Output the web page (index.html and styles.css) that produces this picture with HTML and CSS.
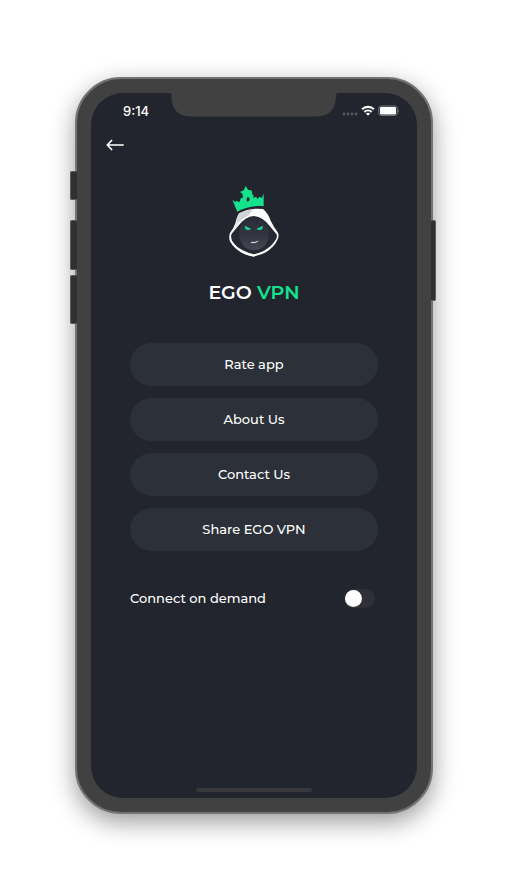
FILE: index.html
```html
<!DOCTYPE html>
<html lang="en">
<head>
<meta charset="utf-8">
<meta name="viewport" content="width=device-width, initial-scale=1">
<title>EGO VPN</title>
<link rel="stylesheet" href="styles.css">
</head>
<body>
<div class="phone">
  <span class="key key-mute"></span>
  <span class="key key-up"></span>
  <span class="key key-down"></span>
  <span class="key key-power"></span>
  <div class="screen">
    <header class="status">
      <time class="clock">9:14</time>
      <svg class="notch" viewBox="0 0 168 24" aria-hidden="true"><path d="M0 0H168Q166 0 166 4C166 16 159 23.500 146 23.500H21C8 23.500 1.500 16 1.500 4Q1.500 0 0 0Z" fill="#414141"/></svg>
      <div class="signals">
        <svg width="16" height="12" viewBox="0 0 16 12" aria-hidden="true"><g fill="#58595e"><circle cx="2" cy="9" r="1.400"/><circle cx="6" cy="9" r="1.400"/><circle cx="10" cy="9" r="1.400"/><circle cx="14" cy="9" r="1.400"/></g></svg>
        <svg width="14" height="12" viewBox="0 0 14 12" aria-hidden="true"><g fill="none" stroke="#fff" stroke-width="2.100"><path d="M1 4.300C4.300 1.100 9.700 1.100 13 4.300"/><path d="M3.300 7C5.400 5 8.600 5 10.700 7"/></g><path d="M4.900 8.600Q7 7 9.100 8.600L7 10.800Z" fill="#fff"/></svg>
        <svg width="22" height="12" viewBox="0 0 22 12" aria-hidden="true"><rect x=".7" y="1" width="18.600" height="9.400" rx="2.400" fill="none" stroke="#77787d"/><rect x="2" y="2" width="16" height="7.500" rx="1.200" fill="#fff"/><path d="M20.200 4.300Q22 6 20.200 7.700Z" fill="#85868a"/></svg>
      </div>
    </header>
    <button class="back" type="button" aria-label="Back">
      <svg width="18" height="12" viewBox="0 0 18 12" aria-hidden="true"><path d="M17.200 6H1.500M5.600 1.500L1.300 6L5.600 10.500" fill="none" stroke="#fff" stroke-width="1.700" stroke-linecap="round" stroke-linejoin="round"/></svg>
    </button>
    <main class="content">
      <svg class="logo" viewBox="0 0 240 270" role="img" aria-label="Hooded figure wearing a crown">
        <defs>
          <linearGradient id="face" x1="0" y1="0" x2="0" y2="1"><stop offset="0" stop-color="#292b36"/><stop offset=".6" stop-color="#343742"/><stop offset="1" stop-color="#464955"/></linearGradient>
        </defs>
        <path d="M70 107L55 72L64 78L68 74L76 79L81 65L87 66L85 53L78 48L89 43L95 30L102 41L114 44L114 55L119 58L118 66L126 62L131 69L136 62L143 66L149 53L149 91C120 88 94 94 70 107Z" fill="#14e28d"/>
        <path d="M98 70Q98 62 103 63Q108 66 107 73L101 77L98 74Z" fill="#22242c"/>
        <path d="M75 112Q108 94 147 99Q162 111 170 134Q180 154 191 169Q197 179 190 192Q179 216 153 230Q130 239 119 242Q102 240 83 230Q61 218 49 198Q43 185 48 171Q59 157 64 142Q67 126 75 112Z" fill="#fff"/>
        <path d="M76 112Q96 101 120 98Q108 109 103 119Q84 126 66 148Q69 126 76 112Z" fill="#d2d3d6"/>
        <path d="M64 149Q73 134 91 128L72 151L51 171Z" fill="#f3f3f4"/>
        <path d="M120 120Q148 123 169 152L187 174Q191 180 186 190Q174 211 149 225Q131 233 119 235Q104 232 86 223Q65 212 54 194Q49 181 53 173L72 151Q94 121 120 120Z" fill="#262832"/>
        <path d="M120 122Q150 130 163 157Q170 190 151 210Q138 222 120 223Q101 221 89 210Q71 190 77 157Q90 130 120 122Z" fill="url(#face)"/>
        <path d="M92 149L112 159Q101 165 94 159Z M147 149L127 159Q138 165 145 159Z" fill="#16dc91"/>
        <path d="M111 199Q125 200 133 195Q127 202 112 201Z" fill="#fff" stroke="#fff"/>
      </svg>
      <h1 class="title">EGO <span class="accent">VPN</span></h1>
      <nav class="menu">
        <button class="item" type="button">Rate app</button>
        <button class="item" type="button">About Us</button>
        <button class="item" type="button">Contact Us</button>
        <button class="item" type="button">Share EGO VPN</button>
      </nav>
      <div class="setting">
        <label for="demand">Connect on demand</label>
        <input class="switch" type="checkbox" role="switch" id="demand">
      </div>
    </main>
    <div class="home"></div>
  </div>
</div>
</body>
</html>
```
FILE: styles.css
```css
* {
  box-sizing: border-box;
}

body {
  display: flex;
  min-height: 100vh;
  margin: 0;
  padding: 77px 77px 76px 75px;
  background: #fff;
  color: #fff;
  font-family: Montserrat, Inter, sans-serif;
}

.phone {
  position: relative;
  display: flex;
  flex: 1;
  min-width: 0;
  padding: 14px;
  border: 2px solid #737373;
  border-radius: 46px;
  background: #414141;
  box-shadow: 0 8px 24px rgba(0, 0, 0, 0.4);
}

/* Side keys sit over the frame edge */
.key {
  position: absolute;
  left: -7px;
  width: 7px;
  border: 1px solid #5c5c5c;
  border-right-width: 0;
  border-radius: 2px 0 0 2px;
  background: #303030;
}

.key-mute {
  top: 92px;
  height: 29px;
}

.key-up {
  top: 141px;
  height: 50px;
}

.key-down {
  top: 196px;
  height: 49px;
}

.key-power {
  top: 141px;
  right: -5px;
  left: auto;
  width: 5px;
  height: 81px;
  border-width: 1px 1px 1px 0;
  border-radius: 0 2px 2px 0;
}

.screen {
  display: flex;
  flex: 1;
  flex-direction: column;
  min-width: 0;
  overflow: hidden;
  border-radius: 32px;
  background: #22252d;
}

.status {
  display: grid;
  grid-template-columns: 1fr 168px 1fr;
  height: 36px;
}

.clock {
  align-self: center;
  padding-left: 32px;
  font-family: Inter, sans-serif;
  font-size: 13px;
  font-weight: 500;
  line-height: 16px;
}

.notch {
  display: block;
  width: 168px;
  height: 24px;
}

.signals {
  display: flex;
  align-items: center;
  justify-content: flex-end;
  gap: 3px;
  padding-right: 17px;
}

.back {
  align-self: flex-start;
  display: flex;
  align-items: center;
  height: 32px;
  margin-left: 7px;
  padding: 0 8px;
  border: 0;
  background: none;
  cursor: pointer;
}

.content {
  display: flex;
  flex: 1;
  flex-direction: column;
  padding: 15px 39px 24px;
}

.logo {
  align-self: center;
  width: 80px;
  height: 90px;
}

.title {
  margin: 13px 0 0;
  font-size: 19px;
  font-weight: 600;
  line-height: 28px;
  text-align: center;
}

.accent {
  color: #14e28d;
}

.menu {
  display: grid;
  gap: 12px;
  margin-top: 36px;
}

.item {
  height: 43px;
  padding: 0 0 2px;
  border: 0;
  border-radius: 22px;
  background: #2c3038;
  color: inherit;
  font: inherit;
  font-size: 13px;
  font-weight: 500;
  cursor: pointer;
}

.setting {
  display: flex;
  align-items: center;
  justify-content: space-between;
  height: 20px;
  margin-top: 37px;
  padding-right: 3px;
  font-size: 13px;
  font-weight: 500;
}

.switch {
  appearance: none;
  width: 31px;
  height: 19px;
  margin: 0;
  padding: 1px;
  border-radius: 10px;
  background: #302f38;
  cursor: pointer;
}

.switch::before {
  display: block;
  width: 17px;
  height: 17px;
  border-radius: 50%;
  background: #fff;
  content: "";
}

.switch:checked {
  background: #14e28d;
}

.switch:checked::before {
  margin-left: auto;
}

.home {
  align-self: center;
  width: 116px;
  height: 4px;
  margin-bottom: 6px;
  border-radius: 2px;
  background: #38383c;
}
```
